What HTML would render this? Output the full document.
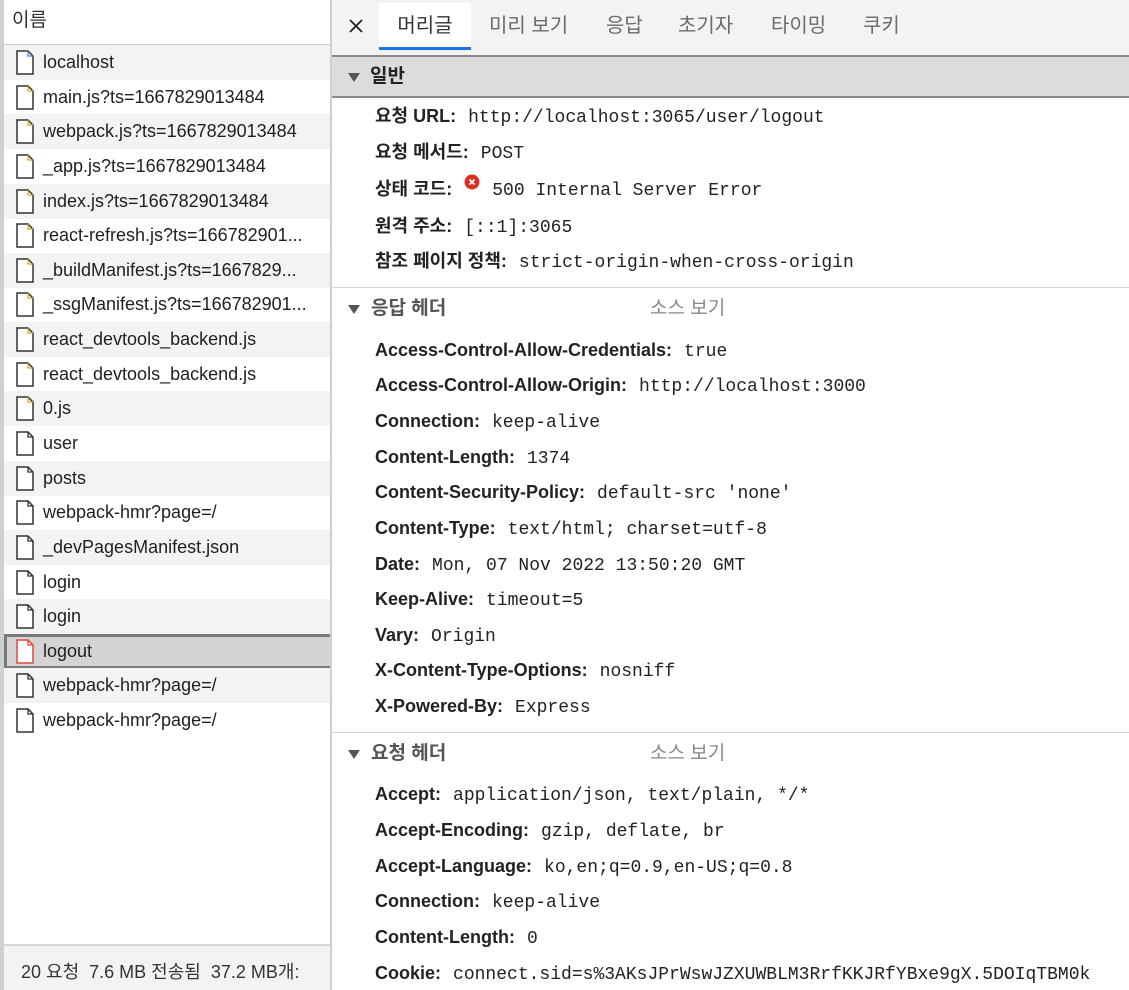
<!DOCTYPE html>
<html><head><meta charset="utf-8"><style>
*{margin:0;padding:0;box-sizing:border-box}
body{width:1129px;height:990px;overflow:hidden;background:#fff;font-family:"Liberation Sans","Noto Sans CJK KR",sans-serif;color:#202124;position:relative}
.left{position:absolute;left:0;top:0;width:332px;height:990px;border-left:4px solid #d0d0d0;border-right:2px solid #cfcfcf;background:#fff}
.lh{position:absolute;left:0;top:0;width:326px;height:45px;border-bottom:1px solid #cdcdcd;font-size:19px;line-height:42px;padding-left:8px;color:#303030}
.r{position:absolute;left:0;width:326px;height:35px;font-size:18px;line-height:35px;padding-left:39px;white-space:nowrap;color:#1f1f1f}
.r.g{background:#f3f3f3}
.r svg{position:absolute;left:11px;top:5px}
.sel{background:#d4d4d4!important;border:3px solid #7a7a7a;border-right:none;border-left:3px solid #7a7a7a;padding-left:36px;line-height:29px}
.sel svg{left:8px;top:2px}
.foot{position:absolute;left:0;top:944px;width:326px;height:46px;border-top:2px solid #d6d6d6;background:#f3f3f3;font-size:18px;line-height:52px;padding-left:17px;white-space:nowrap;overflow:hidden;color:#333}
.tabs{position:absolute;left:332px;top:0;right:0;height:56px;background:#f3f3f3;border-bottom:1px solid #e0e0e0}
.tab{position:absolute;top:3px;height:47px;font-size:20px;line-height:46px;color:#6b6b6b}
.tab.a{background:#fff;color:#333;border-bottom:3px solid #1a73e8;left:47px;width:92px;text-align:center}
.gen{position:absolute;left:332px;right:0;top:55px;height:43px;background:#dcdcdc;border-top:2px solid #8a8a8a;border-bottom:2px solid #8a8a8a;font-size:19px;font-weight:bold;line-height:39px;padding-left:38px;color:#222}
.tri{position:absolute;left:16px;width:0;height:0;border-left:6px solid transparent;border-right:6px solid transparent;border-top:9px solid #555}
.sh{position:absolute;left:332px;right:0;height:40px;font-size:19px;font-weight:bold;line-height:40px;padding-left:39px;color:#555}
.sh .src{position:absolute;left:318px;font-weight:normal;color:#888}
.hr{position:absolute;left:332px;right:0;height:1px;background:#d6d6d6}
.kv{position:absolute;left:375px;height:30px;line-height:30px;font-size:18px;white-space:nowrap;color:#222}
.kv b{font-weight:bold;margin-right:12px}
.kv span{font-family:"Liberation Mono",monospace;font-size:18px}
</style></head><body>
<div class="left">
<div class="lh">이름</div>
<div class="r g" style="top:45px"><svg width="20" height="26"><path d="M2 1h11l5 5v18H2z" fill="#fff" stroke="#333" stroke-width="1.5"/><path d="M13 1v5h5" fill="none" stroke="#4a7fe0" stroke-width="1.3"/></svg>localhost</div>
<div class="r" style="top:79.6px"><svg width="20" height="26"><path d="M2 1h11l5 5v18H2z" fill="#fff" stroke="#333" stroke-width="1.5"/><path d="M13 1v5h5" fill="none" stroke="#d8a520" stroke-width="1.3"/></svg>main.js?ts=1667829013484</div>
<div class="r g" style="top:114.3px"><svg width="20" height="26"><path d="M2 1h11l5 5v18H2z" fill="#fff" stroke="#333" stroke-width="1.5"/><path d="M13 1v5h5" fill="none" stroke="#d8a520" stroke-width="1.3"/></svg>webpack.js?ts=1667829013484</div>
<div class="r" style="top:148.9px"><svg width="20" height="26"><path d="M2 1h11l5 5v18H2z" fill="#fff" stroke="#333" stroke-width="1.5"/><path d="M13 1v5h5" fill="none" stroke="#d8a520" stroke-width="1.3"/></svg>_app.js?ts=1667829013484</div>
<div class="r g" style="top:183.5px"><svg width="20" height="26"><path d="M2 1h11l5 5v18H2z" fill="#fff" stroke="#333" stroke-width="1.5"/><path d="M13 1v5h5" fill="none" stroke="#d8a520" stroke-width="1.3"/></svg>index.js?ts=1667829013484</div>
<div class="r" style="top:218.2px"><svg width="20" height="26"><path d="M2 1h11l5 5v18H2z" fill="#fff" stroke="#333" stroke-width="1.5"/><path d="M13 1v5h5" fill="none" stroke="#d8a520" stroke-width="1.3"/></svg>react-refresh.js?ts=166782901...</div>
<div class="r g" style="top:252.8px"><svg width="20" height="26"><path d="M2 1h11l5 5v18H2z" fill="#fff" stroke="#333" stroke-width="1.5"/><path d="M13 1v5h5" fill="none" stroke="#d8a520" stroke-width="1.3"/></svg>_buildManifest.js?ts=1667829...</div>
<div class="r" style="top:287.4px"><svg width="20" height="26"><path d="M2 1h11l5 5v18H2z" fill="#fff" stroke="#333" stroke-width="1.5"/><path d="M13 1v5h5" fill="none" stroke="#d8a520" stroke-width="1.3"/></svg>_ssgManifest.js?ts=166782901...</div>
<div class="r g" style="top:322.1px"><svg width="20" height="26"><path d="M2 1h11l5 5v18H2z" fill="#fff" stroke="#333" stroke-width="1.5"/><path d="M13 1v5h5" fill="none" stroke="#d8a520" stroke-width="1.3"/></svg>react_devtools_backend.js</div>
<div class="r" style="top:356.7px"><svg width="20" height="26"><path d="M2 1h11l5 5v18H2z" fill="#fff" stroke="#333" stroke-width="1.5"/><path d="M13 1v5h5" fill="none" stroke="#d8a520" stroke-width="1.3"/></svg>react_devtools_backend.js</div>
<div class="r g" style="top:391.3px"><svg width="20" height="26"><path d="M2 1h11l5 5v18H2z" fill="#fff" stroke="#333" stroke-width="1.5"/><path d="M13 1v5h5" fill="none" stroke="#d8a520" stroke-width="1.3"/></svg>0.js</div>
<div class="r" style="top:426px"><svg width="20" height="26"><path d="M2 1h11l5 5v18H2z" fill="#fff" stroke="#333" stroke-width="1.5"/><path d="M13 1v5h5" fill="none" stroke="#333" stroke-width="1.3"/></svg>user</div>
<div class="r g" style="top:460.6px"><svg width="20" height="26"><path d="M2 1h11l5 5v18H2z" fill="#fff" stroke="#333" stroke-width="1.5"/><path d="M13 1v5h5" fill="none" stroke="#333" stroke-width="1.3"/></svg>posts</div>
<div class="r" style="top:495.2px"><svg width="20" height="26"><path d="M2 1h11l5 5v18H2z" fill="#fff" stroke="#333" stroke-width="1.5"/><path d="M13 1v5h5" fill="none" stroke="#333" stroke-width="1.3"/></svg>webpack-hmr?page=/</div>
<div class="r g" style="top:529.9px"><svg width="20" height="26"><path d="M2 1h11l5 5v18H2z" fill="#fff" stroke="#333" stroke-width="1.5"/><path d="M13 1v5h5" fill="none" stroke="#333" stroke-width="1.3"/></svg>_devPagesManifest.json</div>
<div class="r" style="top:564.5px"><svg width="20" height="26"><path d="M2 1h11l5 5v18H2z" fill="#fff" stroke="#333" stroke-width="1.5"/><path d="M13 1v5h5" fill="none" stroke="#333" stroke-width="1.3"/></svg>login</div>
<div class="r g" style="top:599.1px"><svg width="20" height="26"><path d="M2 1h11l5 5v18H2z" fill="#fff" stroke="#333" stroke-width="1.5"/><path d="M13 1v5h5" fill="none" stroke="#333" stroke-width="1.3"/></svg>login</div>
<div class="r sel" style="top:633.8px"><svg width="20" height="26"><path d="M2 1h11l5 5v18H2z" fill="#fff" stroke="#e2493b" stroke-width="1.5"/><path d="M13 1v5h5" fill="none" stroke="#e2493b" stroke-width="1.3"/></svg>logout</div>
<div class="r g" style="top:668.4px"><svg width="20" height="26"><path d="M2 1h11l5 5v18H2z" fill="#fff" stroke="#333" stroke-width="1.5"/><path d="M13 1v5h5" fill="none" stroke="#333" stroke-width="1.3"/></svg>webpack-hmr?page=/</div>
<div class="r" style="top:703px"><svg width="20" height="26"><path d="M2 1h11l5 5v18H2z" fill="#fff" stroke="#333" stroke-width="1.5"/><path d="M13 1v5h5" fill="none" stroke="#333" stroke-width="1.3"/></svg>webpack-hmr?page=/</div>
<div class="foot">20 요청 &nbsp;7.6 MB 전송됨 &nbsp;37.2 MB개:</div>
</div>

<div class="tabs">
<svg style="position:absolute;left:17px;top:19px" width="14" height="14"><path d="M1 1L13 13M13 1L1 13" stroke="#222" stroke-width="1.8"/></svg>
<div class="tab a">머리글</div>
<div class="tab" style="left:157px">미리 보기</div>
<div class="tab" style="left:274px">응답</div>
<div class="tab" style="left:346px">초기자</div>
<div class="tab" style="left:439px">타이밍</div>
<div class="tab" style="left:531px">쿠키</div>
</div>

<div class="gen"><div class="tri" style="top:16px"></div>일반</div>
<div class="kv" style="top:101px"><b>요청 URL:</b><span>http://localhost:3065/user/logout</span></div>
<div class="kv" style="top:137px"><b>요청 메서드:</b><span>POST</span></div>
<div class="kv" style="top:174px"><b>상태 코드:</b><svg width="16" height="16" style="vertical-align:-1px;margin-right:12px;position:relative;top:-6px"><circle cx="8" cy="8" r="7.5" fill="#d93025"/><path d="M5.5 5.5L10.5 10.5M10.5 5.5L5.5 10.5" stroke="#fff" stroke-width="1.6"/></svg><span>500 Internal Server Error</span></div>
<div class="kv" style="top:211px"><b>원격 주소:</b><span>[::1]:3065</span></div>
<div class="kv" style="top:246px"><b>참조 페이지 정책:</b><span>strict-origin-when-cross-origin</span></div>
<div class="hr" style="top:287px"></div>

<div class="sh" style="top:289px"><div class="tri" style="top:16px"></div>응답 헤더<span class="src">소스 보기</span></div>
<div class="kv" style="top:335px"><b>Access-Control-Allow-Credentials:</b><span>true</span></div>
<div class="kv" style="top:370px"><b>Access-Control-Allow-Origin:</b><span>http://localhost:3000</span></div>
<div class="kv" style="top:406px"><b>Connection:</b><span>keep-alive</span></div>
<div class="kv" style="top:442px"><b>Content-Length:</b><span>1374</span></div>
<div class="kv" style="top:477px"><b>Content-Security-Policy:</b><span>default-src 'none'</span></div>
<div class="kv" style="top:513px"><b>Content-Type:</b><span>text/html; charset=utf-8</span></div>
<div class="kv" style="top:549px"><b>Date:</b><span>Mon, 07 Nov 2022 13:50:20 GMT</span></div>
<div class="kv" style="top:584px"><b>Keep-Alive:</b><span>timeout=5</span></div>
<div class="kv" style="top:620px"><b>Vary:</b><span>Origin</span></div>
<div class="kv" style="top:655px"><b>X-Content-Type-Options:</b><span>nosniff</span></div>
<div class="kv" style="top:691px"><b>X-Powered-By:</b><span>Express</span></div>
<div class="hr" style="top:732px"></div>

<div class="sh" style="top:734px"><div class="tri" style="top:16px"></div>요청 헤더<span class="src">소스 보기</span></div>
<div class="kv" style="top:779px"><b>Accept:</b><span>application/json, text/plain, */*</span></div>
<div class="kv" style="top:815px"><b>Accept-Encoding:</b><span>gzip, deflate, br</span></div>
<div class="kv" style="top:851px"><b>Accept-Language:</b><span>ko,en;q=0.9,en-US;q=0.8</span></div>
<div class="kv" style="top:886px"><b>Connection:</b><span>keep-alive</span></div>
<div class="kv" style="top:922px"><b>Content-Length:</b><span>0</span></div>
<div class="kv" style="top:958px;right:0;overflow:hidden"><b>Cookie:</b><span>connect.sid=s%3AKsJPrWswJZXUWBLM3RrfKKJRfYBxe9gX.5DOIqTBM0k</span></div>
</body></html>
